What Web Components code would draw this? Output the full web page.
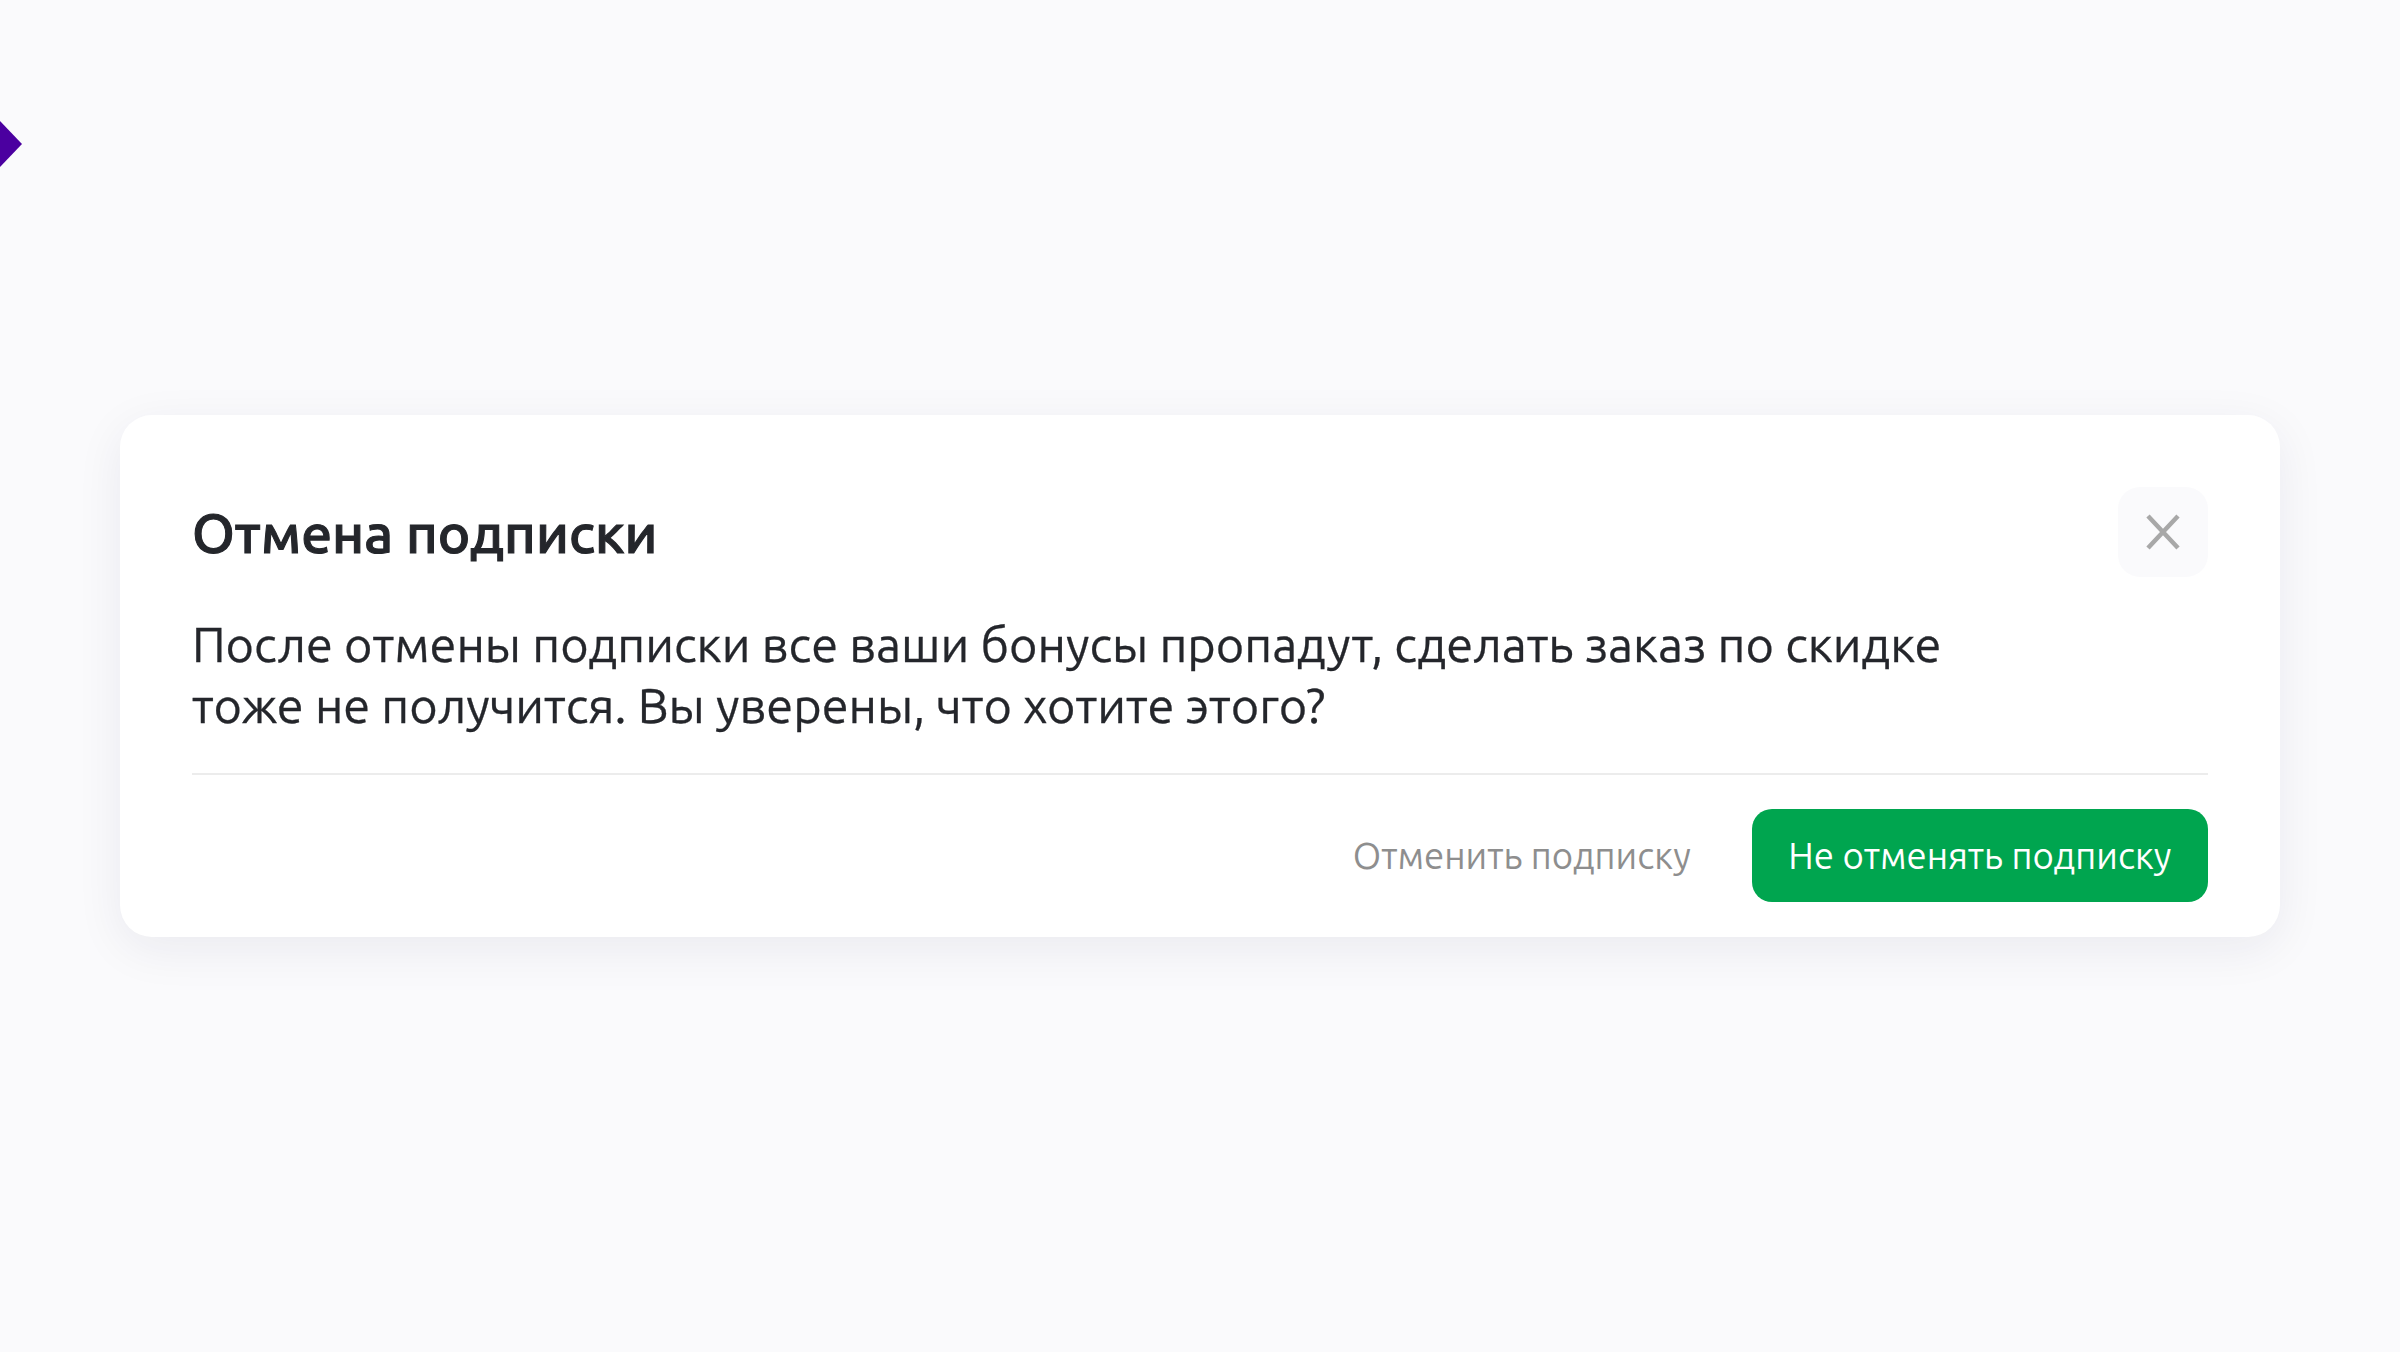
<!DOCTYPE html>
<html><head><meta charset="utf-8"><style>
html,body{margin:0;height:100%;background:#fafafc}
body{width:2400px;height:1352px;overflow:hidden;font-family:Ubuntu,"Noto Sans","Open Sans",sans-serif}
</style></head><body>
<x-page>
<x-dialog>
<span slot="title">Отмена подписки</span>
После отмены подписки все ваши бонусы пропадут, сделать заказ по скидке<br>тоже не получится. Вы уверены, что хотите этого?
<span slot="secondary">Отменить подписку</span>
<span slot="primary">Не отменять подписку</span>
</x-dialog>
</x-page>
<script>
class XPage extends HTMLElement{constructor(){super();this.attachShadow({mode:'open'}).innerHTML=`<style>
:host{display:block;width:2400px;height:1352px;box-sizing:border-box;padding:415px 120px 0;position:relative}
svg{position:absolute;left:0;top:121px}
</style><svg width="22" height="46" viewBox="0 0 22 46"><path d="M0 0L22 23L0 46Z" fill="#4b00a0"/></svg><slot></slot>`}}
class XDialog extends HTMLElement{constructor(){super();this.attachShadow({mode:'open'}).innerHTML=`<style>
:host{display:block;box-sizing:border-box;width:2160px;height:522px;padding:72px 72px 36px;background:#fff;border-radius:32px;box-shadow:0 12px 48px rgba(30,30,70,.07);color:#24262b}
.head{display:flex;justify-content:space-between;align-items:flex-start;height:90px}
.t{font-size:54.9px;font-weight:500;line-height:92px;height:90px;-webkit-text-stroke:1.1px #24262b}
.x{width:90px;height:90px;border-radius:22px;background:#fafafc;display:flex;align-items:center;justify-content:center}
.b{font-size:48.7px;line-height:61px;margin-top:37px;padding-bottom:37px;border-bottom:2px solid #ececec;-webkit-text-stroke:.3px #24262b}
.f{display:flex;justify-content:flex-end;align-items:center;gap:61px;margin-top:34px}
.s{font-size:36.6px;color:#8e8e8e}
.p{font-size:36.6px;color:#fff;background:#00a54f;height:93px;padding:0 36.5px;border-radius:20px;display:flex;align-items:center}
</style><div class="head"><div class="t"><slot name="title"></slot></div><div class="x"><svg width="36" height="36" viewBox="0 0 36 36"><path d="M3 2L33 34M33 2L3 34" stroke="#a8a8a8" stroke-width="4.5" fill="none"/></svg></div></div>
<div class="b"><slot></slot></div>
<div class="f"><div class="s"><slot name="secondary"></slot></div><div class="p"><slot name="primary"></slot></div></div>`}}
customElements.define('x-page',XPage);customElements.define('x-dialog',XDialog);
</script></body></html>
